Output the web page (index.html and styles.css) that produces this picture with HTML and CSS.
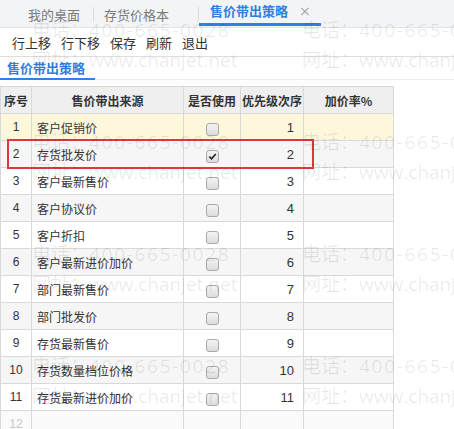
FILE: index.html
```html
<!DOCTYPE html>
<html>
<head>
<meta charset="utf-8">
<link rel="stylesheet" href="styles.css">
</head>
<body>
<div class="page">
  <div class="tabbar">
    <div class="tab tab-first">我的桌面</div>
    <div class="tab tab-second">存货价格本</div>
    <div class="tab tab-active">售价带出策略<span class="close">×</span></div>
  </div>
  <div class="toolbar">
    <span>行上移</span><span>行下移</span><span>保存</span><span>刷新</span><span>退出</span>
  </div>
  <div class="subtabs"><div class="subtab">售价带出策略</div></div>
  <div class="grid-wrap">
    <table class="grid">
      <colgroup><col class="c1"><col class="c2"><col class="c3"><col class="c4"><col class="c5"></colgroup>
      <thead>
        <tr><th>序号</th><th>售价带出来源</th><th>是否使用</th><th>优先级次序</th><th>加价率%</th></tr>
      </thead>
      <tbody>
        <tr class="sel"><td class="no">1</td><td class="name">客户促销价</td><td class="chk"><span class="cb"></span></td><td class="pri">1</td><td></td></tr>
        <tr class="even"><td class="no">2</td><td class="name">存货批发价</td><td class="chk"><span class="cb on"><svg viewBox="0 0 10 10" width="9" height="9"><path d="M1.5 5.2 L4 7.6 L8.6 2.2" fill="none" stroke="#222" stroke-width="1.8"/></svg></span></td><td class="pri">2</td><td></td></tr>
        <tr><td class="no">3</td><td class="name">客户最新售价</td><td class="chk"><span class="cb"></span></td><td class="pri">3</td><td></td></tr>
        <tr class="even"><td class="no">4</td><td class="name">客户协议价</td><td class="chk"><span class="cb"></span></td><td class="pri">4</td><td></td></tr>
        <tr><td class="no">5</td><td class="name">客户折扣</td><td class="chk"><span class="cb"></span></td><td class="pri">5</td><td></td></tr>
        <tr class="even"><td class="no">6</td><td class="name">客户最新进价加价</td><td class="chk"><span class="cb"></span></td><td class="pri">6</td><td></td></tr>
        <tr><td class="no">7</td><td class="name">部门最新售价</td><td class="chk"><span class="cb"></span></td><td class="pri">7</td><td></td></tr>
        <tr class="even"><td class="no">8</td><td class="name">部门批发价</td><td class="chk"><span class="cb"></span></td><td class="pri">8</td><td></td></tr>
        <tr><td class="no">9</td><td class="name">存货最新售价</td><td class="chk"><span class="cb"></span></td><td class="pri">9</td><td></td></tr>
        <tr class="even"><td class="no">10</td><td class="name">存货数量档位价格</td><td class="chk"><span class="cb"></span></td><td class="pri">10</td><td></td></tr>
        <tr><td class="no">11</td><td class="name">存货最新进价加价</td><td class="chk"><span class="cb"></span></td><td class="pri">11</td><td></td></tr>
        <tr class="even empty"><td class="no">12</td><td></td><td></td><td></td><td></td></tr>
      </tbody>
    </table>
    <div class="mark"></div>
  </div>
  <div class="watermark">
    <div class="wm"><div class="l1">电话：<span class="ph">400-665-0028</span></div><div>网址：www.chanjet.net</div></div>
    <div class="wm"><div class="l1">电话：<span class="ph">400-665-0028</span></div><div>网址：www.chanjet.net</div></div>
    <div class="wm"><div class="l1">电话：<span class="ph">400-665-0028</span></div><div>网址：www.chanjet.net</div></div>
    <div class="wm"><div class="l1">电话：<span class="ph">400-665-0028</span></div><div>网址：www.chanjet.net</div></div>
    <div class="wm"><div class="l1">电话：<span class="ph">400-665-0028</span></div><div>网址：www.chanjet.net</div></div>
    <div class="wm"><div class="l1">电话：<span class="ph">400-665-0028</span></div><div>网址：www.chanjet.net</div></div>
    <div class="wm"><div class="l1">电话：<span class="ph">400-665-0028</span></div><div>网址：www.chanjet.net</div></div>
    <div class="wm"><div class="l1">电话：<span class="ph">400-665-0028</span></div><div>网址：www.chanjet.net</div></div>
  </div>
</div>
</body>
</html>
```

FILE: styles.css
```css
* { box-sizing: border-box; }
html, body { margin: 0; padding: 0; }
body {
  width: 454px;
  height: 429px;
  overflow: hidden;
  background: #fff;
  font-family: "Noto Sans CJK SC", "Liberation Sans", sans-serif;
  color: #333;
}
.page { position: relative; width: 454px; height: 429px; overflow: hidden; }

.tabbar {
  height: 28px;
  background: #f3f4f6;
  border-bottom: 1px solid #e4e4e4;
  display: flex;
  align-items: stretch;
  padding-left: 18px;
  font-size: 13px;
  line-height: 16px;
}
.tab {
  display: flex;
  align-items: center;
  color: #7a7a7a;
  position: relative;
}
.tab-first { padding: 0 13px 0 10px; border-right: 1px solid #dcdcdc; margin: 7px 0 5px; }
.tab-second { padding: 0 29px 0 10px; border-right: 1px solid #dcdcdc; margin: 7px 0 5px; }
.tab-active {
  padding: 0 10px 2px 11px;
  color: #2f7fe3;
  font-weight: bold;
  border-bottom: 3px solid #2f80ed;
  margin-bottom: 1px;
}
.close {
  font-weight: normal;
  color: #aaa;
  font-family: "DejaVu Sans", sans-serif;
  font-size: 14px;
  margin-left: 11px;
}

.toolbar {
  height: 29px;
  border-bottom: 1px solid #dddddd;
  display: flex;
  align-items: center;
  gap: 10px;
  padding-left: 12px;
  font-size: 13px;
  color: #333;
}

.subtabs {
  height: 23px;
  border-bottom: 1px solid #ececec;
  display: flex;
}
.subtab {
  padding: 2px 10px 0 7px;
  font-size: 13px;
  font-weight: bold;
  color: #2f7fe3;
  border-bottom: 2px solid #2f80ed;
  margin-bottom: -1px;
  line-height: 18px;
}

.grid-wrap { position: relative; margin-top: 6px; }
.grid {
  border-collapse: collapse;
  table-layout: fixed;
  width: 393px;
  font-size: 12px;
}
.c1 { width: 31px; }
.c2 { width: 152px; }
.c3 { width: 57px; }
.c4 { width: 63px; }
.c5 { width: 90px; }
.grid th, .grid td {
  border: 1px solid #d9d9d9;
  padding: 0;
  height: 27px;
  white-space: nowrap;
  overflow: hidden;
}
.grid th {
  background: #efefef;
  font-weight: bold;
  color: #333;
  height: 27px;
  text-align: center;
}
.grid tr.sel td { background: #fdf8dc; }
.grid tr.even td { background: #f6f6f6; }
.grid td.no { text-align: center; font-family: "Liberation Sans", sans-serif; font-size: 12px; }
.grid td.name { padding-left: 5px; color: #333; }
.grid td.chk { text-align: center; }
.grid td.pri { text-align: right; padding-right: 9px; font-family: "Liberation Sans", sans-serif; font-size: 13px; }
.grid tr.empty td { background: #fafafa; }
.grid tr.empty td.no { color: #c8c8c8; }

.cb {
  display: inline-flex;
  align-items: center;
  justify-content: center;
  width: 13px;
  height: 13px;
  border: 1px solid #a9a9a9;
  border-radius: 3px;
  background: linear-gradient(#f4f4f4, #dcdcdc);
  vertical-align: middle;
}

.mark {
  position: absolute;
  left: 7px;
  top: 53px;
  width: 307px;
  height: 30px;
  border: 2px solid #e0363c;
  pointer-events: none;
}

.watermark {
  position: absolute;
  left: 0;
  top: 0;
  width: 700px;
  height: 500px;
  padding: 15px 0 0 32px;
  display: grid;
  grid-template-columns: 270px 270px;
  grid-auto-rows: 112px;
  pointer-events: none;
  font-family: "Open Sans", "Noto Sans CJK SC", sans-serif;
  font-size: 19px;
  line-height: 30px;
  color: rgba(0, 0, 0, 0.09);
  white-space: nowrap;
}
.wm .ph { letter-spacing: 1.7px; }
```
